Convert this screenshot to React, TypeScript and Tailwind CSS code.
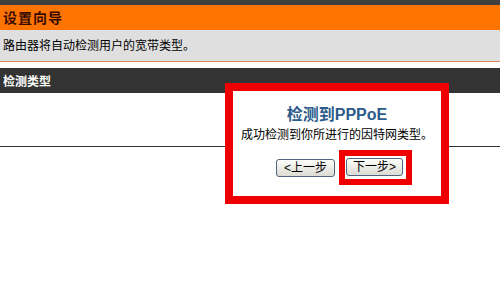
export default function App() {
  const font = { fontFamily: '"Liberation Sans", "Noto Sans CJK SC", sans-serif' }
  return (
    <div className="w-[500px] h-[300px] bg-white overflow-hidden" style={font}>
      <div className="h-[5px] bg-[#404040]" />
      <div className="h-[25px] bg-[#ff7300] flex items-center pl-[3px] pt-[2px]">
        <span className="text-[14px] font-bold text-[#3a0c00] tracking-[1px]">设置向导</span>
      </div>
      <div className="h-[32px] bg-[#dfdfdf] border-b border-[#d98a5a] flex items-center pl-[3px]">
        <span className="text-[12px] text-black">路由器将自动检测用户的宽带类型。</span>
      </div>
      <div className="h-[6px]" />
      <div className="h-[25px] bg-[#333333] flex items-center pl-[3px] pt-[2px]">
        <span className="text-[12px] font-bold text-white">检测类型</span>
      </div>
      <div className="relative">
        <div className="h-[54px] border-b border-[#333333]" />
        <div className="absolute left-[225px] top-[-10px] w-[224px] h-[121px] border-[8px] border-[#ee0000] bg-white flex flex-col">
          <div className="pt-[14px] text-center text-[16px] leading-[20px] font-bold text-[#2c5b8c]">检测到PPPoE</div>
          <div className="mt-[2px] text-center text-[12px] leading-[16px] text-black">成功检测到你所进行的因特网类型。</div>
          <div className="mt-[7px] pl-[43px] flex items-center gap-[4px]">
            <button className="w-[59px] h-[18px] rounded-[3px] border border-[#4f6580] bg-gradient-to-b from-[#fdfdfb] to-[#dcdcd4] text-[12px] leading-none text-black flex items-center justify-center">
              &lt;上一步
            </button>
            <span className="border-[6px] border-[#ee0000] pl-[1px] pr-[3px] pt-[2px] pb-[3px] flex">
              <button className="w-[57px] h-[18px] rounded-[3px] border border-[#4f6580] bg-gradient-to-b from-[#fdfdfb] to-[#dcdcd4] text-[12px] leading-none text-black flex items-center justify-center">
                下一步&gt;
              </button>
            </span>
          </div>
        </div>
      </div>
    </div>
  )
}
